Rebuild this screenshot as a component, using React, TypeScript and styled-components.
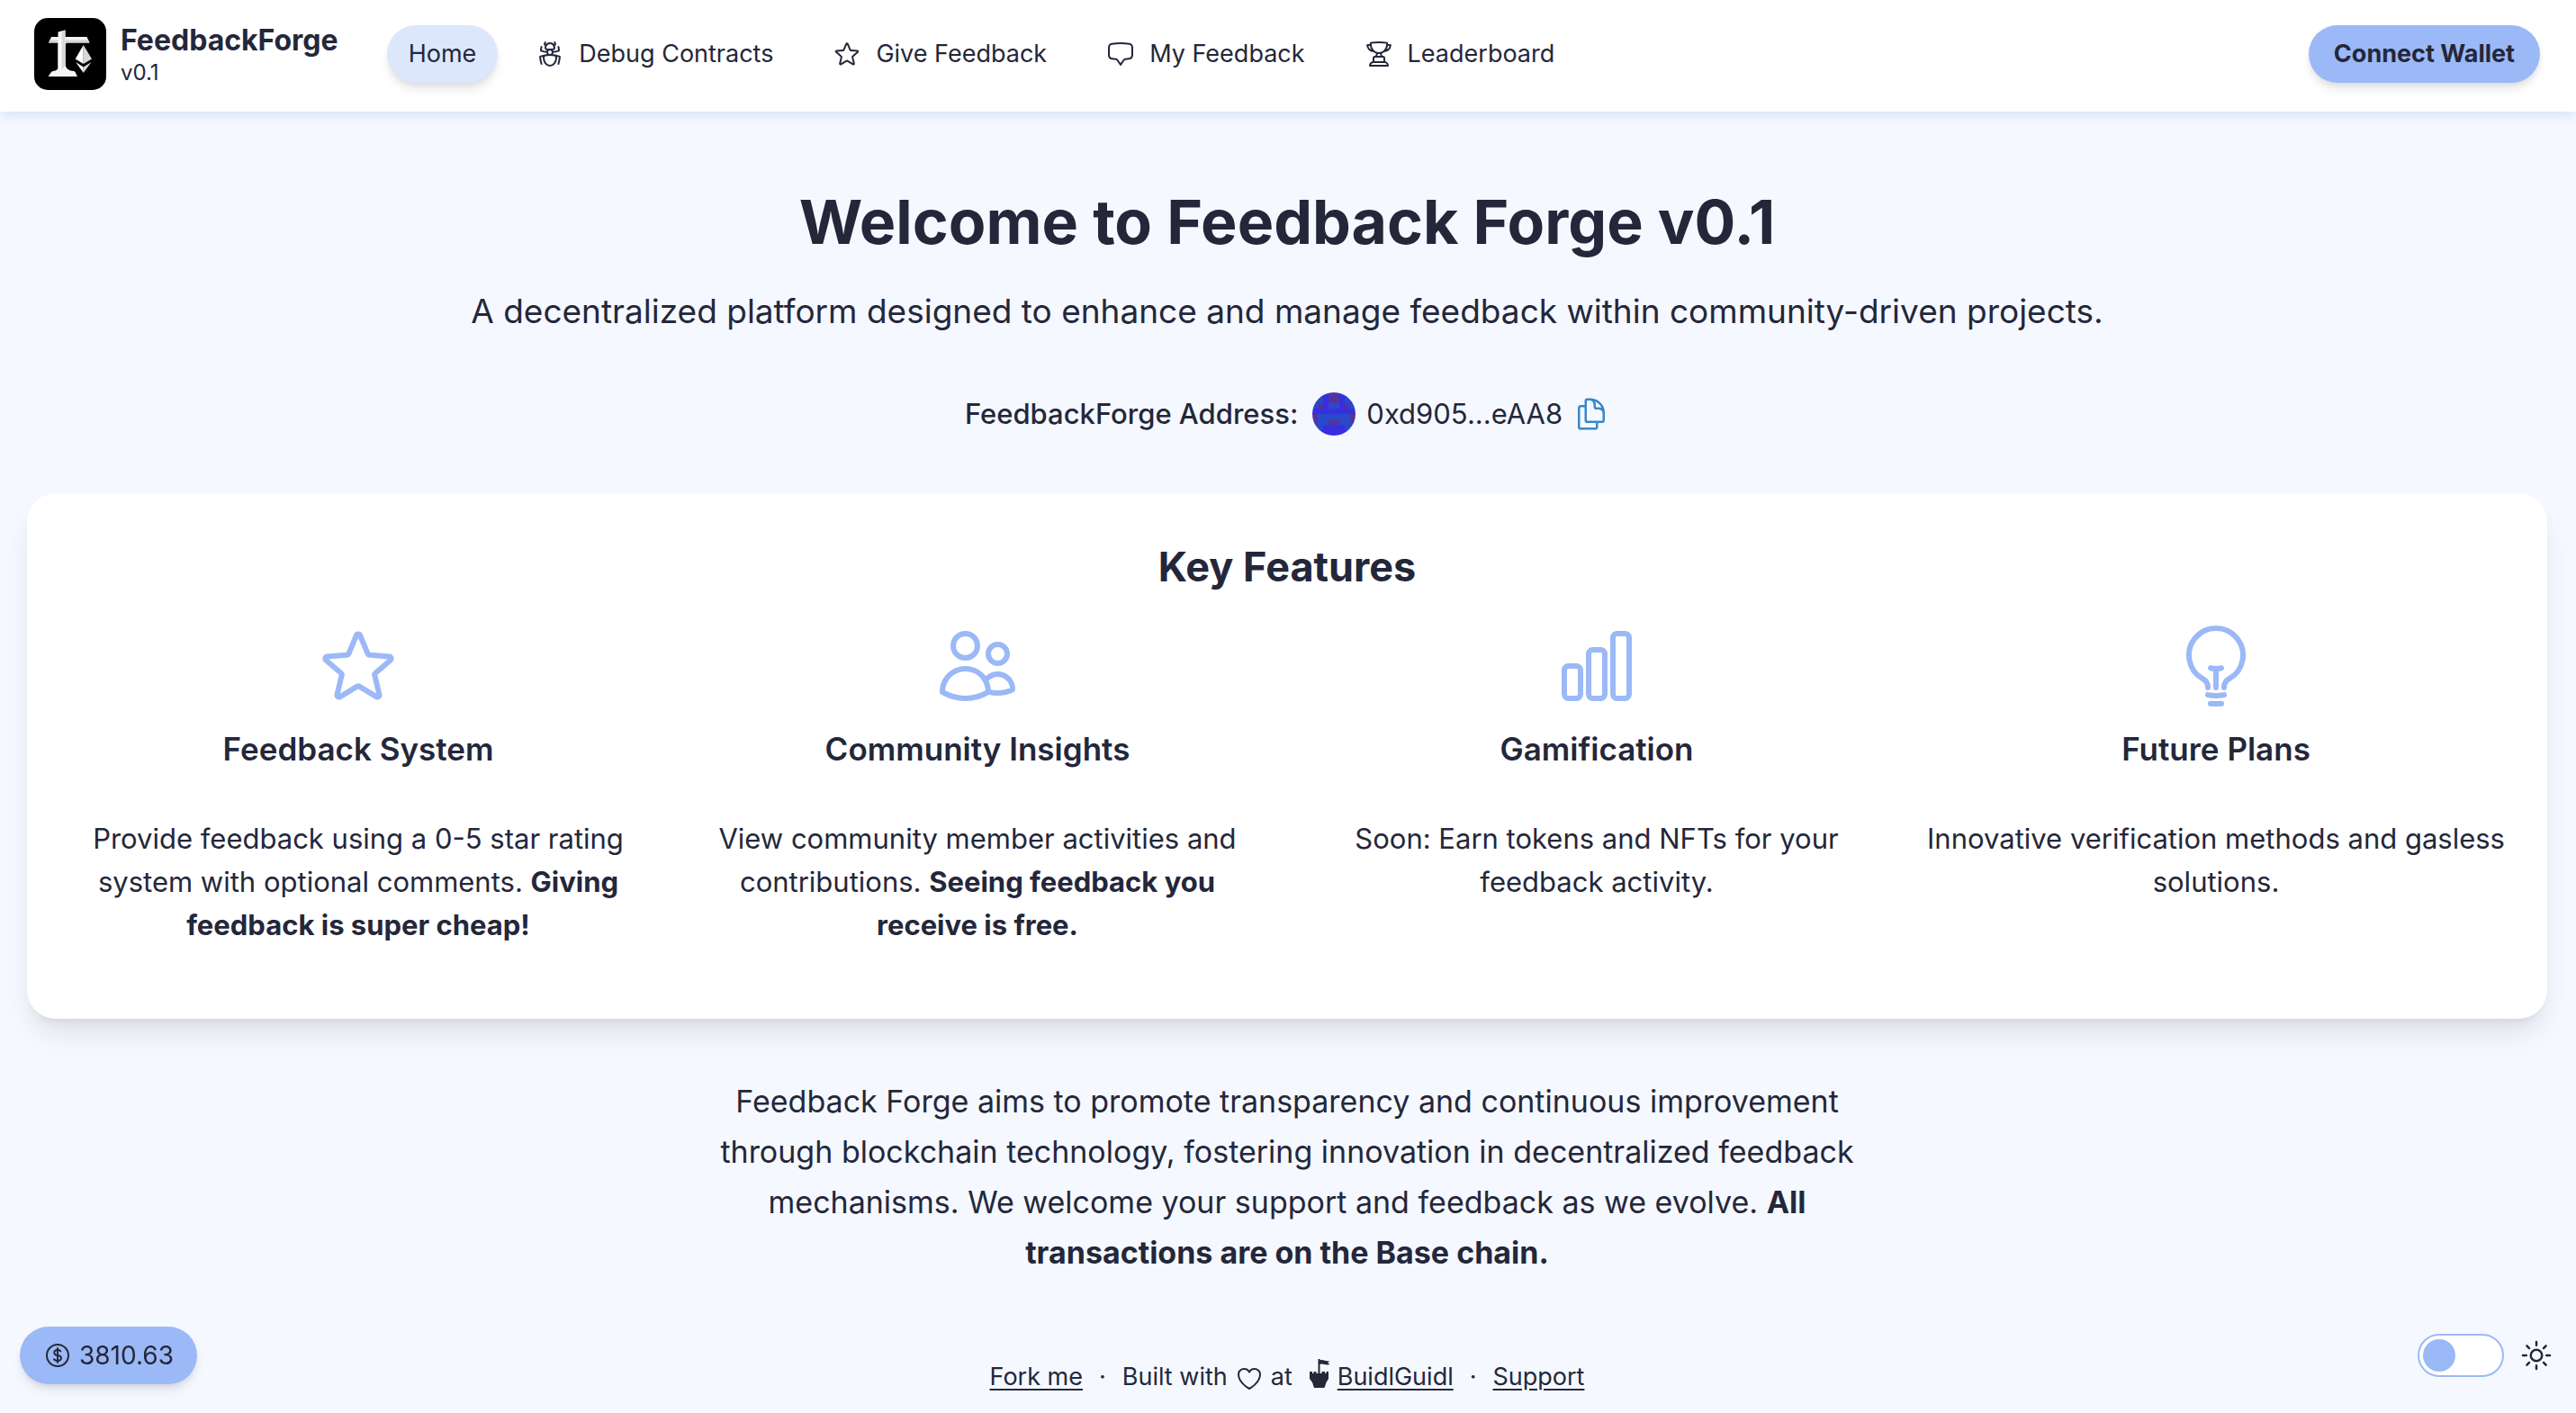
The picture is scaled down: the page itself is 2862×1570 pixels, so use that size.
import React from "react";
import styled, { createGlobalStyle, css } from "styled-components";
import {
  HiOutlineBugAnt,
  HiOutlineChartBar,
  HiOutlineChatBubbleBottomCenter,
  HiOutlineCurrencyDollar,
  HiOutlineDocumentDuplicate,
  HiOutlineHeart,
  HiOutlineLightBulb,
  HiOutlineStar,
  HiOutlineSun,
  HiOutlineTrophy,
  HiOutlineUsers,
} from "react-icons/hi2";

const color = {
  primary: "#9bb9f6",
  secondary: "#dce7fc",
  base: "#ffffff",
  page: "#f5f8ff",
  ink: "#24273a",
  link: "#3a87c8",
};

const GlobalStyle = createGlobalStyle`
  *, *::before, *::after { box-sizing: border-box; }
  body {
    margin: 0;
    background: ${color.page};
    color: ${color.ink};
    font-family: Inter, "Liberation Sans", sans-serif;
    font-size: 31px;
    line-height: 48px;
  }
  h1, h2, h3, p { margin: 0; }
  a { color: inherit; }
  button { font: inherit; color: inherit; border: 0; cursor: pointer; }
  svg { display: block; flex: none; }
`;

const pillShadow = css`
  box-shadow: 0 8px 12px -2px rgba(0, 0, 0, 0.1), 0 4px 8px -4px rgba(0, 0, 0, 0.1);
`;

const Page = styled.div`
  min-height: 100vh;
  display: flex;
  flex-direction: column;
`;

const Header = styled.header`
  display: flex;
  align-items: center;
  min-height: 124px;
  padding: 0 40px 4px 38px;
  background: ${color.base};
  box-shadow: 0 8px 12px -2px ${color.secondary}, 0 4px 8px -4px ${color.secondary};
`;

const Brand = styled.a`
  display: flex;
  align-items: center;
  gap: 16px;
  margin-right: 54px;
  text-decoration: none;
`;

const BrandText = styled.span`
  display: flex;
  flex-direction: column;
  padding-top: 2px;
`;

const BrandName = styled.span`
  font-size: 32px;
  line-height: 40px;
  font-weight: 700;
`;

const BrandVersion = styled.span`
  font-size: 24px;
  line-height: 32px;
`;

const Nav = styled.nav`
  flex: 1;
  display: flex;
  gap: 18px;
`;

const NavLink = styled.a<{ $active?: boolean }>`
  display: flex;
  align-items: center;
  gap: 16px;
  height: 64px;
  padding: 0 24px;
  border-radius: 32px;
  font-size: 27px;
  line-height: 40px;
  text-decoration: none;
  ${(p) =>
    p.$active &&
    css`
      background: ${color.secondary};
      ${pillShadow}
    `}
`;

const ConnectButton = styled.button`
  height: 64px;
  padding: 0 28px;
  border-radius: 32px;
  background: ${color.primary};
  font-size: 27px;
  font-weight: 700;
  ${pillShadow}
`;

const Main = styled.main`
  display: flex;
  flex-direction: column;
  align-items: center;
  padding: 82px 32px 0 30px;
  text-align: center;
`;

const Title = styled.h1`
  margin-bottom: 32px;
  font-size: 68px;
  line-height: 80px;
  font-weight: 700;
`;

const Subtitle = styled.p`
  font-size: 37px;
  line-height: 56px;
`;

const AddressRow = styled.div`
  display: flex;
  align-items: center;
  gap: 16px;
  margin: 62px 0 64px;
  font-weight: 500;
`;

const Address = styled.div`
  display: flex;
  align-items: center;
  gap: 12px;
  font-weight: 400;
`;

const CopyButton = styled.button`
  padding: 0;
  background: none;
  color: ${color.link};
`;

const Card = styled.section`
  width: 100%;
  padding: 50px 46px 48px;
  border-radius: 32px;
  background: ${color.base};
  box-shadow: 0 20px 30px -6px rgba(0, 0, 0, 0.1), 0 8px 12px -8px rgba(0, 0, 0, 0.1);
`;

const CardTitle = styled.h2`
  margin-bottom: 30px;
  font-size: 45px;
  line-height: 64px;
  font-weight: 700;
`;

const Features = styled.div`
  display: grid;
  grid-template-columns: repeat(4, 1fr);
  gap: 44px;
`;

const Feature = styled.article`
  display: flex;
  flex-direction: column;
  align-items: center;
  padding-bottom: 32px;
  svg { color: ${color.primary}; }
`;

const FeatureTitle = styled.h3`
  margin: 16px 0 48px;
  font-size: 35px;
  line-height: 56px;
  font-weight: 600;
`;

const Mission = styled.p`
  max-width: 1320px;
  margin-top: 64px;
  font-size: 34px;
  line-height: 56px;
`;

const Footer = styled.footer`
  display: flex;
  justify-content: center;
  align-items: center;
  gap: 18px;
  margin-top: auto;
  padding: 64px 2px 18px 0;
  font-size: 27px;
  line-height: 40px;
  a { text-underline-offset: 4px; }
`;

const FooterGroup = styled.span`
  display: flex;
  align-items: center;
  gap: 8px;
`;

const HeartIcon = styled(HiOutlineHeart)`
  margin-top: 4px;
`;

const CastleIcon = styled.svg`
  margin-bottom: 8px;
`;

const FloatingBar = styled.div`
  position: fixed;
  left: 22px;
  right: 24px;
  bottom: 32px;
  display: flex;
  justify-content: space-between;
  align-items: center;
  pointer-events: none;
  > * { pointer-events: auto; }
`;

const PriceButton = styled.button`
  display: flex;
  align-items: center;
  gap: 8px;
  height: 64px;
  padding: 0 26px;
  border-radius: 32px;
  background: ${color.primary};
  font-size: 28px;
  ${pillShadow}
`;

const ThemeSwitch = styled.label`
  display: flex;
  align-items: center;
  gap: 16px;
`;

const Toggle = styled.input`
  appearance: none;
  display: flex;
  align-items: center;
  width: 96px;
  height: 48px;
  margin: 0;
  padding: 0 4px;
  border: 2px solid ${color.primary};
  border-radius: 24px;
  background: ${color.base};
  &::before {
    content: "";
    width: 36px;
    height: 36px;
    border-radius: 50%;
    background: ${color.primary};
  }
  &:checked { justify-content: flex-end; }
`;

const Logo = () => (
  <svg width="80" height="80" viewBox="0 0 80 80" aria-hidden="true">
    <rect width="80" height="80" rx="15" fill="#000" />
    <path d="M19 21H58.500L61.500 27.500H37q-2.500 0-2.500 2.500V52q1 5 6 6.500 4 0 5 1.500L48 65H15.500L19 60q1-1.500 4.500-1.500 3-1 3-4.500V27.500H16Z" fill="#f4f4f4" />
    <path d="M16 27.500L17.500 24.500H26.500V27.500ZM34.500 24.500H60L61.500 27.500H37q-2.500 0-2.500 2.500Z" fill="#d4d4d4" />
    <path d="M26.500 15.500L34.500 13.500V56L30.500 60 26.500 54Z" fill="#f8f8f8" />
    <path d="M30.500 14.500L34.500 13.500V53L30.500 58Z" fill="#d9d9d9" />
    <path d="M54.700 30L45.700 45.500 54.700 51Z" fill="#fff" />
    <path d="M54.700 30L64 45.500 54.700 51Z" fill="#d8d8d8" />
    <path d="M46.200 49L54.700 54.500V61Z" fill="#fff" />
    <path d="M63.500 49L54.700 54.500V61Z" fill="#d8d8d8" />
  </svg>
);

const identiconRows = ["vvvppvvv", "vbvppvbv", "bpvbbvpb", "vvvvvvvv", "pbbbbbbp", "pbbppbbp", "bbvvvvbb", "vvvvvvvv"];
const identiconColors: Record<string, string> = { v: "#3a2de0", p: "#4f35a2", b: "#2849cc" };

const RoundSvg = styled.svg`
  border-radius: 50%;
`;

const Identicon = () => (
  <RoundSvg width="48" height="48" viewBox="0 0 8 8" shapeRendering="crispEdges" aria-hidden="true">
    {identiconRows.map((row, y) =>
      row.split("").map((cell, x) => (
        <rect key={`${x}-${y}`} x={x} y={y} width="1" height="1" fill={identiconColors[cell]} />
      )),
    )}
  </RoundSvg>
);

const Castle = () => (
  <CastleIcon width="24" height="36" viewBox="0 0 24 36" fill="currentColor" aria-hidden="true">
    <path d="M10.500 2h2v1.500c3-1.500 5 1.500 11 .5l-2.500 2 2.500 2c-5 1.500-7-1.500-11 0V18h2v-2H18v2h1.500V16H22v8l-2.500 4-2 6H6l-2-6L1 24v-8h3v2h1.500V16h3v2h2Z" />
  </CastleIcon>
);

const navItems = [
  { label: "Debug Contracts", Icon: HiOutlineBugAnt },
  { label: "Give Feedback", Icon: HiOutlineStar },
  { label: "My Feedback", Icon: HiOutlineChatBubbleBottomCenter },
  { label: "Leaderboard", Icon: HiOutlineTrophy },
];

const features = [
  {
    title: "Feedback System",
    Icon: HiOutlineStar,
    text: "Provide feedback using a 0-5 star rating system with optional comments. ",
    strong: "Giving feedback is super cheap!",
  },
  {
    title: "Community Insights",
    Icon: HiOutlineUsers,
    text: "View community member activities and contributions. ",
    strong: "Seeing feedback you receive is free.",
  },
  { title: "Gamification", Icon: HiOutlineChartBar, text: "Soon: Earn tokens and NFTs for your feedback activity." },
  { title: "Future Plans", Icon: HiOutlineLightBulb, text: "Innovative verification methods and gasless solutions." },
];

export default function App() {
  return (
    <>
      <GlobalStyle />
      <Page>
        <Header>
          <Brand href="#">
            <Logo />
            <BrandText>
              <BrandName>FeedbackForge</BrandName>
              <BrandVersion>v0.1</BrandVersion>
            </BrandText>
          </Brand>
          <Nav>
            <NavLink href="#" $active>
              Home
            </NavLink>
            {navItems.map(({ label, Icon }) => (
              <NavLink href="#" key={label}>
                <Icon size={32} />
                {label}
              </NavLink>
            ))}
          </Nav>
          <ConnectButton type="button">Connect Wallet</ConnectButton>
        </Header>

        <Main>
          <Title>Welcome to Feedback Forge v0.1</Title>
          <Subtitle>
            A decentralized platform designed to enhance and manage feedback within community-driven projects.
          </Subtitle>
          <AddressRow>
            <span>FeedbackForge Address:</span>
            <Address>
              <Identicon />
              <span>0xd905...eAA8</span>
              <CopyButton type="button" aria-label="Copy address">
                <HiOutlineDocumentDuplicate size={40} />
              </CopyButton>
            </Address>
          </AddressRow>

          <Card>
            <CardTitle>Key Features</CardTitle>
            <Features>
              {features.map(({ title, Icon, text, strong }) => (
                <Feature key={title}>
                  <Icon size={96} />
                  <FeatureTitle>{title}</FeatureTitle>
                  <p>
                    {text}
                    {strong && <strong>{strong}</strong>}
                  </p>
                </Feature>
              ))}
            </Features>
          </Card>

          <Mission>
            Feedback Forge aims to promote transparency and continuous improvement through blockchain technology,
            fostering innovation in decentralized feedback mechanisms. We welcome your support and feedback as we
            evolve. <strong>All transactions are on the Base chain.</strong>
          </Mission>
        </Main>

        <Footer>
          <a href="#">Fork me</a>
          <span>·</span>
          <FooterGroup>
            Built with <HeartIcon size={32} /> at
          </FooterGroup>
          <FooterGroup>
            <Castle />
            <a href="#">BuidlGuidl</a>
          </FooterGroup>
          <span>·</span>
          <a href="#">Support</a>
        </Footer>
      </Page>

      <FloatingBar>
        <PriceButton type="button">
          <HiOutlineCurrencyDollar size={32} />
          3810.63
        </PriceButton>
        <ThemeSwitch>
          <Toggle type="checkbox" aria-label="Dark theme" />
          <HiOutlineSun size={40} />
        </ThemeSwitch>
      </FloatingBar>
    </>
  );
}
